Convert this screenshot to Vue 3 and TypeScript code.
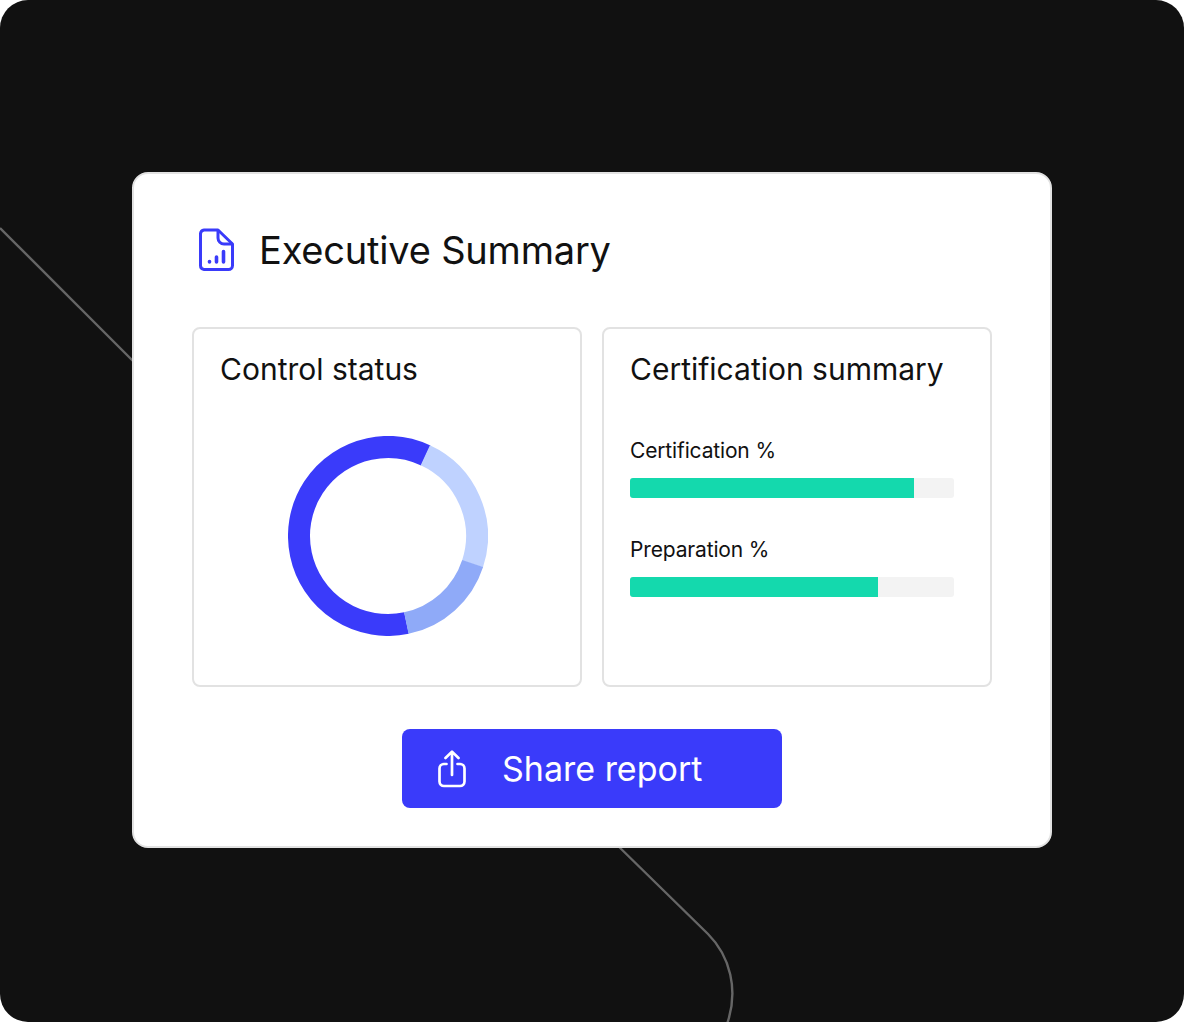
<script setup lang="ts">
const r = 89
const c = 2 * Math.PI * r
const segs = [
  { color: '#3a3bfa', from: 168, to: 384.8 },
  { color: '#bfd2ff', from: 24.8, to: 108 },
  { color: '#8faaf8', from: 108, to: 168 },
]
const dash = (s: { from: number; to: number }) => `${((s.to - s.from) / 360) * c} ${c}`
const rot = (s: { from: number }) => `rotate(${s.from - 90} 100 100)`
const bars = [
  { label: 'Certification %', pct: 87.7 },
  { label: 'Preparation %', pct: 76.5 },
]
</script>

<template>
  <div class="stage">
    <svg class="lines" width="1184" height="1022" viewBox="0 0 1184 1022" fill="none">
      <path d="M0 228 L140 368" />
      <path d="M612 840 L708 934 C730 956 739 990 727 1024" />
    </svg>
    <section class="card">
      <header class="head">
        <svg class="doc" width="36" height="44" viewBox="0 0 36 44" fill="none">
          <path d="M6 2 H20 L34.5 16 V37.5 A4 4 0 0 1 30.5 41.5 H6 A4 4 0 0 1 2.5 37.5 V5.5 A4 4 0 0 1 6 2 Z" stroke="#3a3bfa" stroke-width="3" stroke-linejoin="round" />
          <path d="M20 2 V10 A6 6 0 0 0 26 16 H34.5" stroke="#3a3bfa" stroke-width="3" stroke-linejoin="round" />
          <path d="M11.5 33.5 V34 M18.5 29 V34 M25.5 23.5 V34" stroke="#3a3bfa" stroke-width="3.6" stroke-linecap="round" />
        </svg>
        <h1>Executive Summary</h1>
      </header>
      <div class="panels">
        <article class="panel">
          <h2>Control status</h2>
          <div class="donut-wrap">
            <svg width="200" height="200" viewBox="0 0 200 200" fill="none">
              <circle
                v-for="s in segs"
                :key="s.color"
                cx="100"
                cy="100"
                :r="r"
                :stroke="s.color"
                stroke-width="22"
                :stroke-dasharray="dash(s)"
                :transform="rot(s)"
              />
            </svg>
          </div>
        </article>
        <article class="panel">
          <h2>Certification summary</h2>
          <div class="bars">
            <div v-for="b in bars" :key="b.label" class="bar-item">
              <div class="bar-label">{{ b.label }}</div>
              <div class="track"><div class="fill" :style="{ width: b.pct + '%' }"></div></div>
            </div>
          </div>
        </article>
      </div>
      <button class="share" type="button">
        <svg width="28" height="38" viewBox="0 0 28 38" fill="none">
          <path d="M8.5 14 H6 A4.5 4.5 0 0 0 1.5 18.5 V31.5 A4.5 4.5 0 0 0 6 36 H22 A4.5 4.5 0 0 0 26.5 31.5 V18.5 A4.5 4.5 0 0 0 22 14 H19.5" stroke="#fff" stroke-width="2.7" stroke-linecap="round" />
          <path d="M14 25 V2 M7.5 8 L14 1.6 L20.5 8" stroke="#fff" stroke-width="2.7" stroke-linecap="round" stroke-linejoin="round" />
        </svg>
        <span>Share report</span>
      </button>
    </section>
  </div>
</template>

<style>
html,
body {
  margin: 0;
  background: #fff;
}
</style>

<style scoped>
.stage {
  position: relative;
  box-sizing: border-box;
  width: 1184px;
  height: 1022px;
  padding: 172px 132px 0;
  background: #111111;
  border-radius: 28px;
  overflow: hidden;
  font-family: Inter, "Liberation Sans", sans-serif;
  color: #111111;
}
.lines {
  position: absolute;
  inset: 0;
}
.lines path {
  stroke: #666666;
  stroke-width: 2.4;
}
.card {
  position: relative;
  box-sizing: border-box;
  width: 920px;
  height: 676px;
  padding: 54px 58px 0;
  background: #fff;
  border: 2px solid #e2e2e2;
  border-radius: 16px;
  display: flex;
  flex-direction: column;
}
.head {
  display: flex;
  align-items: center;
  gap: 25px;
  height: 44px;
  padding-left: 6px;
}
.doc {
  flex: none;
}
h1 {
  margin: 0;
  font-size: 38px;
  font-weight: 400;
  line-height: 44px;
  letter-spacing: -0.2px;
}
.panels {
  display: grid;
  grid-template-columns: 390px 390px;
  gap: 20px;
  margin-top: 55px;
}
.panel {
  box-sizing: border-box;
  height: 360px;
  padding: 23px 26px 0;
  border: 2px solid #e2e2e2;
  border-radius: 8px;
}
h2 {
  margin: 0;
  font-size: 30px;
  font-weight: 400;
  line-height: 34px;
}
.donut-wrap {
  display: flex;
  justify-content: center;
  margin-top: 50px;
  padding-left: 2px;
}
.donut-wrap svg {
  display: block;
}
.bars {
  margin-top: 52px;
  display: flex;
  flex-direction: column;
  gap: 39px;
}
.bar-label {
  font-size: 21px;
  line-height: 26px;
  letter-spacing: -0.15px;
}
.track {
  width: 324px;
  height: 20px;
  margin-top: 14px;
  background: #f3f3f3;
  border-radius: 3px;
  overflow: hidden;
}
.fill {
  height: 100%;
  background: #14d9ad;
}
.share {
  align-self: center;
  box-sizing: border-box;
  width: 380px;
  height: 79px;
  margin-top: 42px;
  padding: 0 0 0 36px;
  display: flex;
  align-items: center;
  gap: 36px;
  background: #3a3bfa;
  border: 0;
  border-radius: 8px;
  color: #fff;
  font: inherit;
  font-size: 34px;
}
</style>
